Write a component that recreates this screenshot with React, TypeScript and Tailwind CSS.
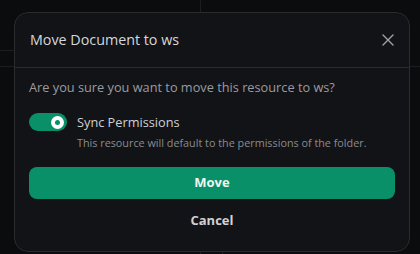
import React from "react";

export default function App() {
  return (
    <div
      className="relative w-[420px] h-[254px] overflow-hidden bg-[#0b0c0e]"
      style={{ fontFamily: '"Open Sans", "Noto Sans", sans-serif' }}
    >
      {/* faint background lines */}
      <div className="absolute left-[200px] top-0 h-[12px] w-px bg-[#1c1d20]" />
      <div className="absolute left-0 top-[50px] h-px w-[14px] bg-[#1c1d20]" />
      <div className="absolute left-0 top-[66px] h-px w-[14px] bg-[#1c1d20]" />
      <div className="absolute right-0 top-[66px] h-px w-[11px] bg-[#1c1d20]" />
      <div className="absolute left-[200px] bottom-0 h-[3px] w-px bg-[#1c1d20]" />
      <div className="absolute left-[222px] bottom-0 h-[3px] w-px bg-[#1c1d20]" />

      <div className="absolute left-[14px] top-[12px] w-[396px] h-[240px] rounded-[14px] border border-[#2a2b2f] bg-[#121316] flex flex-col">
        <div className="flex items-center justify-between h-[55px] pl-[15px] pr-[14px] border-b border-[#2a2b2f]">
          <span className="text-[14.3px] text-[#d6d7da]">Move Document to ws</span>
          <svg width="14" height="14" viewBox="0 0 14 14" className="text-[#a1a1a6]">
            <path d="M2 2 L12 12 M12 2 L2 12" stroke="currentColor" strokeWidth="1.4" strokeLinecap="round" />
          </svg>
        </div>
        <div className="flex flex-col px-[14px] pt-[10px]">
          <p className="text-[12.75px] text-[#9a9ba0] leading-[18px]">
            Are you sure you want to move this resource to ws?
          </p>
          <div className="flex items-start gap-[10px] mt-[15px]">
            <div className="mt-[2px] w-[38px] h-[18px] rounded-full bg-[#0a9068] flex items-center justify-end pr-[3px]">
              <div className="w-[13px] h-[13px] rounded-full bg-white flex items-center justify-center">
                <div className="w-[5px] h-[5px] rounded-full bg-[#0a9068]" />
              </div>
            </div>
            <div className="flex flex-col">
              <span className="text-[12.75px] text-[#d0d1d4] leading-[20px] mt-[1px]">Sync Permissions</span>
              <span className="text-[10.8px] text-[#8a8b90] leading-[16px] mt-[3px]">
                This resource will default to the permissions of the folder.
              </span>
            </div>
          </div>
          <button className="mt-[16px] h-[32px] w-full rounded-[8px] bg-[#0a9068] text-[13px] font-bold text-[#eef7f3]">
            Move
          </button>
          <button className="mt-[6px] h-[32px] w-full text-[13px] font-bold text-[#d0d1d4]">
            Cancel
          </button>
        </div>
      </div>
    </div>
  );
}
